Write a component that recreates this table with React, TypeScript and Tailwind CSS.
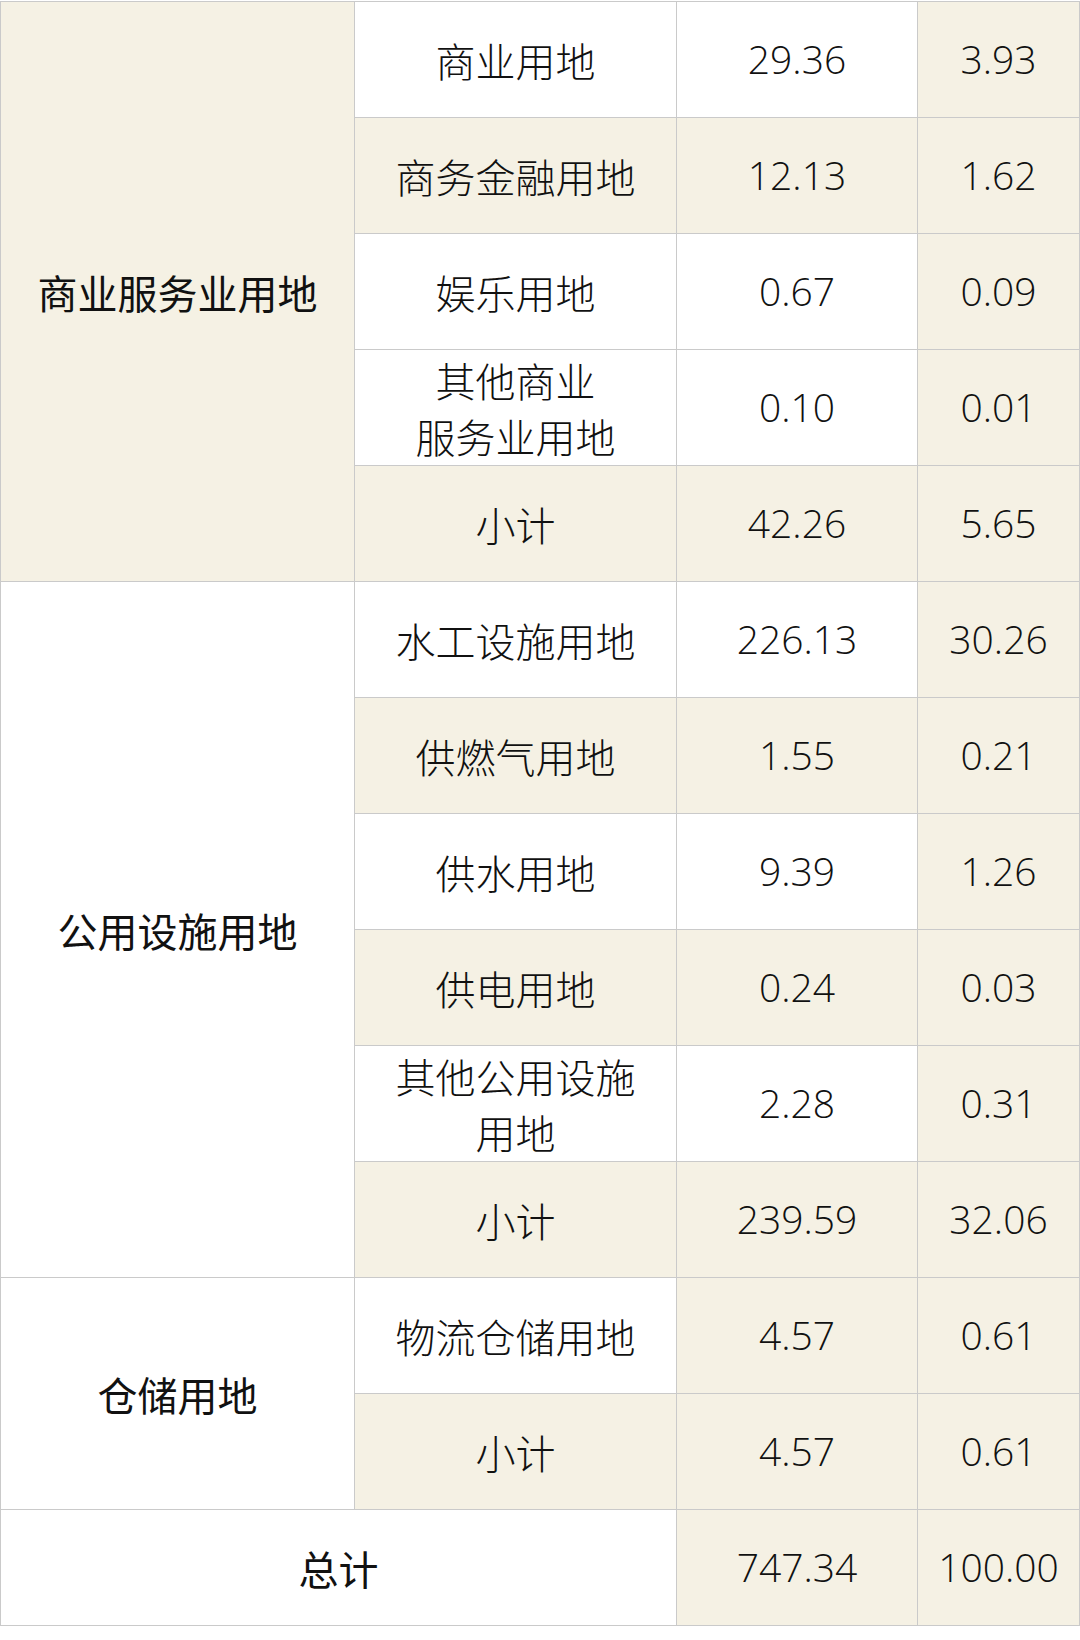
import React from "react"

type Row = {
    name: string[]
    area: string
    pct: string
    nameBg: boolean
    areaBg: boolean
}

type Group = {
    label: string
    beige: boolean
    rows: Row[]
}

const groups: Group[] = [
    {
        label: "商业服务业用地",
        beige: true,
        rows: [
            { name: ["商业用地"], area: "29.36", pct: "3.93", nameBg: false, areaBg: false },
            { name: ["商务金融用地"], area: "12.13", pct: "1.62", nameBg: true, areaBg: true },
            { name: ["娱乐用地"], area: "0.67", pct: "0.09", nameBg: false, areaBg: false },
            { name: ["其他商业", "服务业用地"], area: "0.10", pct: "0.01", nameBg: false, areaBg: false },
            { name: ["小计"], area: "42.26", pct: "5.65", nameBg: true, areaBg: true },
        ],
    },
    {
        label: "公用设施用地",
        beige: false,
        rows: [
            { name: ["水工设施用地"], area: "226.13", pct: "30.26", nameBg: false, areaBg: false },
            { name: ["供燃气用地"], area: "1.55", pct: "0.21", nameBg: true, areaBg: true },
            { name: ["供水用地"], area: "9.39", pct: "1.26", nameBg: false, areaBg: false },
            { name: ["供电用地"], area: "0.24", pct: "0.03", nameBg: true, areaBg: true },
            { name: ["其他公用设施", "用地"], area: "2.28", pct: "0.31", nameBg: false, areaBg: false },
            { name: ["小计"], area: "239.59", pct: "32.06", nameBg: true, areaBg: true },
        ],
    },
    {
        label: "仓储用地",
        beige: false,
        rows: [
            { name: ["物流仓储用地"], area: "4.57", pct: "0.61", nameBg: false, areaBg: true },
            { name: ["小计"], area: "4.57", pct: "0.61", nameBg: true, areaBg: true },
        ],
    },
]

const cell = "border border-[#cacaca] text-center align-middle p-0"
const cjk = "font-['Noto_Sans_CJK_SC',sans-serif]"
const num = "font-['Open_Sans','Noto_Sans_CJK_SC',sans-serif] font-light text-[39px]"

export default function App() {
    return (
        <div className="w-[1080px] h-[1640px] bg-white pt-[1px] text-[#111]">
            <table className="w-full table-fixed border-collapse text-[40px]">
                <colgroup>
                    <col className="w-[354px]" />
                    <col className="w-[322px]" />
                    <col className="w-[241px]" />
                    <col />
                </colgroup>
                <tbody>
                    {groups.map((g) =>
                        g.rows.map((r, i) => (
                            <tr key={g.label + i} className="h-[116px]">
                                {i === 0 && (
                                    <td
                                        rowSpan={g.rows.length}
                                        className={`${cell} ${cjk} font-normal ${g.beige ? "bg-[#f5f1e4]" : "bg-white"}`}
                                    >
                                        {g.label}
                                    </td>
                                )}
                                <td className={`${cell} ${cjk} font-light leading-[56px] ${r.nameBg ? "bg-[#f5f1e4]" : "bg-white"}`}>
                                    {r.name.map((n) => (
                                        <div key={n}>{n}</div>
                                    ))}
                                </td>
                                <td className={`${cell} ${num} ${r.areaBg ? "bg-[#f5f1e4]" : "bg-white"}`}>{r.area}</td>
                                <td className={`${cell} ${num} bg-[#f5f1e4]`}>{r.pct}</td>
                            </tr>
                        ))
                    )}
                    <tr className="h-[116px]">
                        <td colSpan={2} className={`${cell} ${cjk} font-normal bg-white`}>总计</td>
                        <td className={`${cell} ${num} bg-[#f5f1e4]`}>747.34</td>
                        <td className={`${cell} ${num} bg-[#f5f1e4]`}>100.00</td>
                    </tr>
                </tbody>
            </table>
        </div>
    )
}
